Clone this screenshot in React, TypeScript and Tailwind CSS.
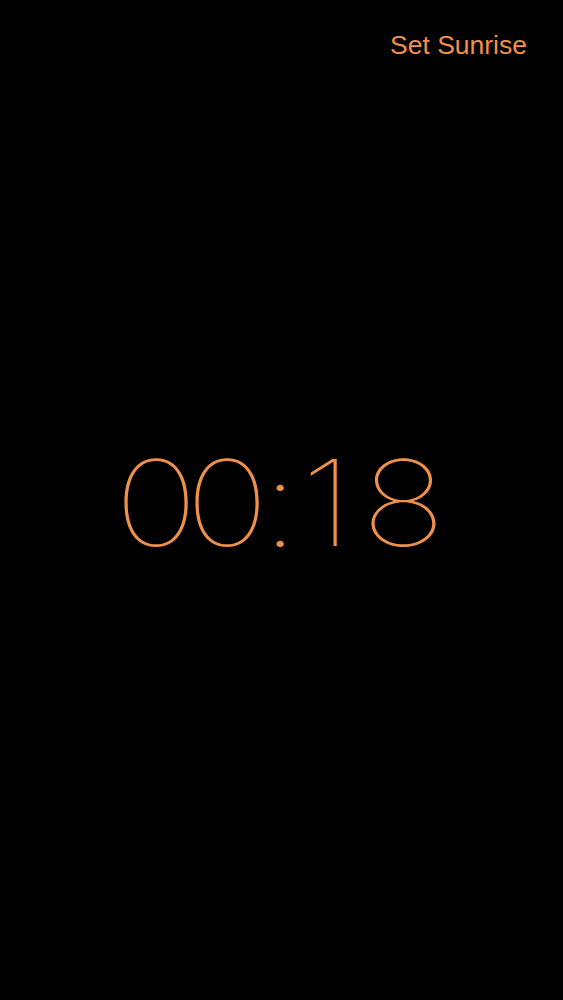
const DIGITS = [
  { ch: "0", cell: "w-[71px]" },
  { ch: "0", cell: "w-[71px]" },
  { ch: ":", cell: "w-[34px]" },
  { ch: "1", cell: "w-[60px]" },
  { ch: "8", cell: "w-[94px]" },
];

export default function App() {
  return (
    <div className="flex h-[1000px] w-full flex-col bg-black">
      <div className="flex justify-end pr-[36px] pt-[29px]">
        <button
          type="button"
          className="text-[26.5px] leading-[32px] text-[#f0914a]"
          style={{ fontFamily: '"Liberation Sans", Arial, sans-serif' }}
        >
          Set Sunrise
        </button>
      </div>
      <div
        className="flex flex-1 items-center justify-center pb-[54px] pl-[9px] text-[119px] font-thin leading-none text-[#f0914a]"
        style={{ fontFamily: 'Inter, "Noto Sans", sans-serif' }}
      >
        {DIGITS.map((d, i) => (
          <span key={i} className={`flex justify-center ${d.cell}`}>
            <span className="inline-block scale-x-[1.19]">{d.ch}</span>
          </span>
        ))}
      </div>
    </div>
  );
}
